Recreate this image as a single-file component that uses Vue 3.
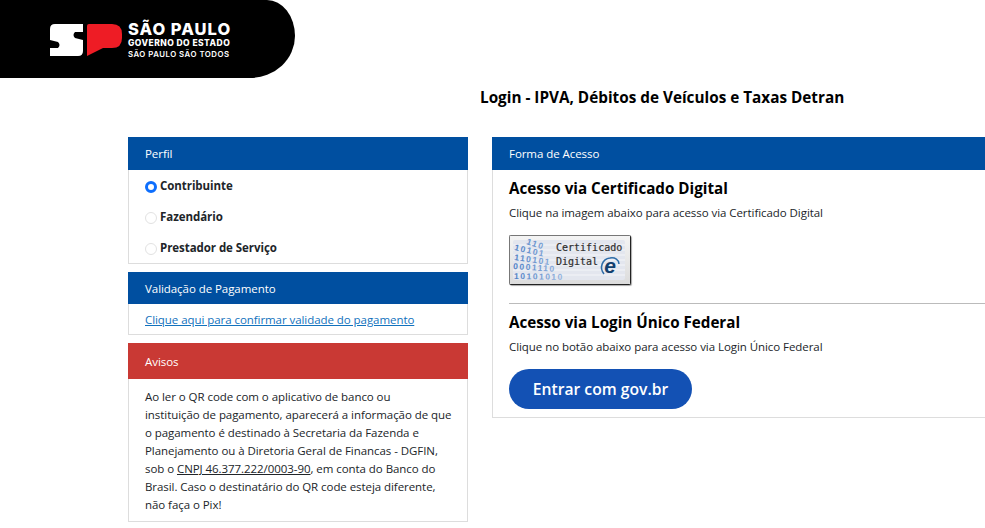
<script setup>
const perfis = [
  { label: 'Contribuinte', checked: true },
  { label: 'Fazendário', checked: false },
  { label: 'Prestador de Serviço', checked: false }
];
</script>

<template>
  <div class="page">
    <header class="topo">
      <div class="logo-box">
        <svg class="logo-sp" width="72" height="33" viewBox="0 0 72 33">
          <path fill="#fff" d="M5 0 H33 V8 H25 Q22 11 25 14 L33 16 V27 Q33 32 28 32 H0 V24 H8 Q11 21 8 18 L0 16 V5 Q0 0 5 0 Z" />
          <path fill="#ee1c25" d="M39 0 H62 Q72 0 72 10 V14 Q72 24 62 24 H53 L37 32 V2 Q37 0 39 0 Z" />
        </svg>
        <div class="logo-text">
          <span class="logo-1">SÃO PAULO</span>
          <span class="logo-2">GOVERNO DO ESTADO</span>
          <span class="logo-3">SÃO PAULO SÃO TODOS</span>
        </div>
      </div>
    </header>

    <h1 class="titulo">Login - IPVA, Débitos de Veículos e Taxas Detran</h1>

    <main class="colunas">
      <div class="esquerda">
        <section class="painel">
          <div class="painel-topo">Perfil</div>
          <div class="perfis">
            <label v-for="p in perfis" :key="p.label" class="perfil">
              <span class="radio" :class="{ on: p.checked }"></span>
              <b>{{ p.label }}</b>
            </label>
          </div>
        </section>

        <section class="painel">
          <div class="painel-topo menor">Validação de Pagamento</div>
          <div class="validacao">
            <a href="#" class="link">Clique aqui para confirmar validade do pagamento</a>
          </div>
        </section>

        <section class="painel">
          <div class="painel-topo vermelho">Avisos</div>
          <p class="aviso">
            Ao ler o QR code com o aplicativo de banco ou<br />
            instituição de pagamento, aparecerá a informação de que<br />
            o pagamento é destinado à Secretaria da Fazenda e<br />
            Planejamento ou à Diretoria Geral de Financas - DGFIN,<br />
            sob o <u>CNPJ 46.377.222/0003-90</u>, em conta do Banco do<br />
            Brasil. Caso o destinatário do QR code esteja diferente,<br />
            não faça o Pix!
          </p>
        </section>
      </div>

      <section class="painel direita">
        <div class="painel-topo">Forma de Acesso</div>
        <div class="acesso">
          <h2>Acesso via Certificado Digital</h2>
          <p>Clique na imagem abaixo para acesso via Certificado Digital</p>
          <div class="cert">
            <svg class="cert-bg" width="120" height="48" viewBox="0 0 120 48">
              <defs>
                <linearGradient id="fundo" x1="0" y1="0" x2="0" y2="1">
                  <stop offset="0" stop-color="#f4f4f4" />
                  <stop offset="1" stop-color="#dcdcdc" />
                </linearGradient>
                <linearGradient id="digitos" gradientUnits="userSpaceOnUse" x1="3" y1="0" x2="85" y2="0">
                  <stop offset="0" stop-color="#4f7fc4" />
                  <stop offset="0.55" stop-color="#8fb0dc" />
                  <stop offset="1" stop-color="#d5e0ef" />
                </linearGradient>
              </defs>
              <rect width="120" height="48" fill="url(#fundo)" />
              <rect x="3" y="4" width="112" height="40" rx="2" fill="#e3e6ee" />
              <g stroke="#f4f5f8" stroke-width="1">
                <path d="M3 9 H115 M3 14 H115 M3 19 H115 M3 24 H115 M3 29 H115 M3 34 H115 M3 39 H115" />
              </g>
              <g fill="url(#digitos)">
                <text x="16" y="8" transform="rotate(18 16 8)">110</text>
                <text x="4" y="14" transform="rotate(13 4 14)">10101</text>
                <text x="4" y="24" transform="rotate(8 4 24)">110101</text>
                <text x="3" y="33" transform="rotate(4 3 33)">0001110</text>
                <text x="4" y="43" transform="rotate(1 4 43)">10101010</text>
              </g>
            </svg>
            <span class="cert-t1">Certificado</span>
            <span class="cert-t2">Digital</span>
            <svg class="cert-e" width="24" height="28" viewBox="0 0 24 28">
              <path d="M5 22 C0 16 3 7 11 6 C16 5 20 8 20 12" fill="none" stroke="#2c6ca8" stroke-width="1.500" />
              <text x="11" y="21" class="cert-e-letra">e</text>
            </svg>
          </div>
          <hr />
          <h2>Acesso via Login Único Federal</h2>
          <p>Clique no botão abaixo para acesso via Login Único Federal</p>
          <button class="gov">Entrar com gov.br</button>
        </div>
      </section>
    </main>
  </div>
</template>

<style scoped>
.page {
  width: 985px;
  height: 528px;
  overflow: hidden;
  font-family: "Open Sans", "Noto Sans", sans-serif;
  font-size: 11.500px;
  letter-spacing: -0.06px;
  color: #212529;
  background: #fff;
}
.topo {
  height: 78px;
  width: 295px;
  background: #000;
  border-top-right-radius: 28px 36px;
  border-bottom-right-radius: 45px 42px;
  display: flex;
}
.logo-box {
  margin-left: 50px;
  margin-top: 21px;
  display: flex;
  align-items: flex-start;
  gap: 6px;
  height: 36px;
}
.logo-sp {
  margin-top: 3px;
}
.logo-text {
  display: flex;
  flex-direction: column;
  color: #fff;
  font-family: "Inter", sans-serif;
  font-weight: 800;
  letter-spacing: 0;
}
.logo-1 { font-size: 16.500px; line-height: 16px; letter-spacing: 1px; white-space: nowrap; }
.logo-2 { font-size: 8.500px; line-height: 12px; letter-spacing: 0.45px; white-space: nowrap; }
.logo-3 { font-size: 7.800px; line-height: 10px; font-weight: 600; letter-spacing: 0.5px; white-space: nowrap; }
.titulo {
  margin: 9px 0 0 480px;
  font-size: 15.300px;
  line-height: 20px;
  font-weight: 700;
  color: #000;
  letter-spacing: 0;
  white-space: nowrap;
}
.colunas {
  display: flex;
  gap: 24px;
  margin-top: 30px;
  padding-left: 128px;
  align-items: flex-start;
}
.esquerda {
  width: 340px;
  flex-shrink: 0;
  display: flex;
  flex-direction: column;
  gap: 8px;
}
.painel {
  border: 1px solid #ddd;
  border-top: none;
}
.painel-topo {
  margin: 0 -1px;
  height: 33px;
  line-height: 33px;
  padding-left: 17px;
  background: #004fa0;
  color: #fff;
}
.menor {
  height: 32px;
  line-height: 34px;
}
.vermelho {
  background: #c93934;
  height: 36px;
  line-height: 38px;
}
.perfis {
  padding: 0 16px;
}
.perfil {
  display: flex;
  align-items: center;
  gap: 3px;
  height: 31px;
  color: #212529;
}
.radio {
  width: 12px;
  height: 12px;
  margin-top: 2px;
  border-radius: 50%;
  border: 1px solid #e2e2e2;
  box-sizing: border-box;
}
.radio.on {
  border: 3px solid #0d6efd;
  background: #fff;
}
.validacao {
  padding: 8px 16px 0;
  height: 30px;
  box-sizing: border-box;
}
.link {
  color: #1272bd;
  text-decoration: underline;
}
.aviso {
  margin: 0;
  padding: 9px 16px 7px;
  line-height: 18px;
  white-space: nowrap;
}
.direita {
  width: 493px;
  flex-shrink: 0;
  border-right: none;
}
.acesso {
  padding: 7px 16px 8px;
}
.acesso h2 {
  margin: 0;
  font-size: 15.200px;
  line-height: 22px;
  color: #000;
  font-weight: 700;
  letter-spacing: 0;
}
.acesso p {
  margin: 6px 0 0;
  line-height: 16px;
}
.cert {
  position: relative;
  width: 122px;
  height: 50px;
  margin-top: 14px;
  box-sizing: border-box;
  border: 1px solid #777;
  border-right-color: #222;
  border-bottom-color: #222;
  border-radius: 2px;
  box-shadow: 1px 1px 1px #aaa;
  overflow: hidden;
}
.cert-bg {
  display: block;
}
.cert-bg text {
  font-family: "Liberation Sans", sans-serif;
  font-size: 8.500px;
  font-weight: 700;
  letter-spacing: 1.500px;
}
.cert-t1,
.cert-t2 {
  position: absolute;
  left: 46px;
  font-family: "DejaVu Sans Mono", monospace;
  font-size: 10px;
  line-height: 12px;
  letter-spacing: 0;
  color: #2f2f2f;
  -webkit-text-stroke: 0.2px #2f2f2f;
}
.cert-t1 {
  top: 6px;
}
.cert-t2 {
  top: 20px;
}
.cert-e {
  position: absolute;
  left: 89px;
  top: 16px;
}
.cert-e-letra {
  font-family: "Liberation Sans", sans-serif;
  font-size: 21px;
  font-weight: 700;
  font-style: italic;
  text-anchor: middle;
  fill: #123f6e;
}
.acesso hr {
  border: none;
  border-top: 1px solid #bbb;
  margin: 18px -16px 7px 0;
}
.gov {
  display: block;
  margin-top: 14px;
  width: 183px;
  height: 40px;
  border: none;
  border-radius: 20px;
  background: #1351b4;
  color: #fff;
  font-family: inherit;
  font-size: 15.700px;
  font-weight: 600;
  letter-spacing: 0;
}
</style>
